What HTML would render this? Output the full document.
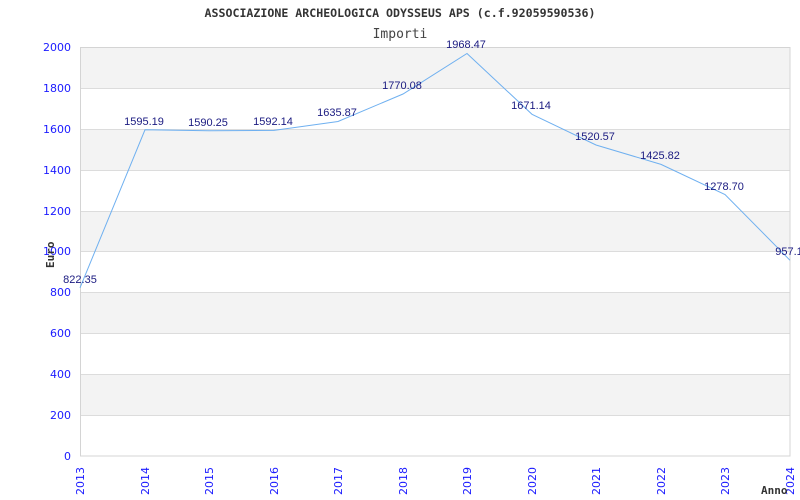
<!DOCTYPE html>
<html><head><style>body{margin:0;background:#fff}svg{display:block}</style></head><body>
<svg width="800" height="500" xmlns="http://www.w3.org/2000/svg" font-family="Liberation Sans, DejaVu Sans, sans-serif">
<rect width="800" height="500" fill="#fff"/>
<g fill="#f3f3f3">
<rect x="80" y="47" width="710" height="41"/>
<rect x="80" y="129" width="710" height="41"/>
<rect x="80" y="211" width="710" height="40"/>
<rect x="80" y="292" width="710" height="41"/>
<rect x="80" y="374" width="710" height="41"/>
</g>
<g stroke="#dcdcdc" stroke-width="1">
<line x1="80" y1="88.5" x2="790" y2="88.5"/><line x1="80" y1="129.5" x2="790" y2="129.5"/>
<line x1="80" y1="170.5" x2="790" y2="170.5"/><line x1="80" y1="211.5" x2="790" y2="211.5"/>
<line x1="80" y1="251.5" x2="790" y2="251.5"/><line x1="80" y1="292.5" x2="790" y2="292.5"/>
<line x1="80" y1="333.5" x2="790" y2="333.5"/><line x1="80" y1="374.5" x2="790" y2="374.5"/>
<line x1="80" y1="415.5" x2="790" y2="415.5"/>
</g>
<rect x="80.5" y="47.5" width="709.5" height="408.5" fill="none" stroke="#d4d4d4"/>
<text x="400" y="17" text-anchor="middle" font-family="DejaVu Sans Mono, Liberation Mono, monospace" font-weight="bold" font-size="11.6" fill="#333">ASSOCIAZIONE ARCHEOLOGICA ODYSSEUS APS (c.f.92059590536)</text>
<text x="400" y="38" text-anchor="middle" font-family="DejaVu Sans Mono, Liberation Mono, monospace" font-size="13" fill="#444">Importi</text>
<g font-family="DejaVu Sans, sans-serif" font-size="11" fill="#1a1aff" text-anchor="end">
<text x="71" y="51">2000</text><text x="71" y="92">1800</text><text x="71" y="133">1600</text>
<text x="71" y="174">1400</text><text x="71" y="215">1200</text><text x="71" y="255">1000</text>
<text x="71" y="296">800</text><text x="71" y="337">600</text><text x="71" y="378">400</text>
<text x="71" y="419">200</text><text x="71" y="460">0</text>
</g>
<g font-family="DejaVu Sans, sans-serif" font-size="11" fill="#1a1aff">
<text transform="translate(84,495) rotate(-90)">2013</text>
<text transform="translate(149,495) rotate(-90)">2014</text>
<text transform="translate(213,495) rotate(-90)">2015</text>
<text transform="translate(278,495) rotate(-90)">2016</text>
<text transform="translate(342,495) rotate(-90)">2017</text>
<text transform="translate(407,495) rotate(-90)">2018</text>
<text transform="translate(471,495) rotate(-90)">2019</text>
<text transform="translate(536,495) rotate(-90)">2020</text>
<text transform="translate(600,495) rotate(-90)">2021</text>
<text transform="translate(665,495) rotate(-90)">2022</text>
<text transform="translate(729,495) rotate(-90)">2023</text>
<text transform="translate(794,495) rotate(-90)">2024</text>
</g>
<text transform="translate(54,268) rotate(-90)" font-family="DejaVu Sans Mono, monospace" font-weight="bold" font-size="11" fill="#333">Euro</text>
<text x="761" y="494" font-family="DejaVu Sans Mono, monospace" font-weight="bold" font-size="11" fill="#333">Anno</text>
<polyline fill="none" stroke="#6fb0f0" stroke-width="1" points="80,287.8 145,129.8 209,130.8 274,130.4 338,121.5 403,94 467,53.5 532,114.3 596,145 661,164.4 725,194.5 790,260.3"/>
<g font-family="Liberation Sans, sans-serif" font-size="11" fill="#1a1a80" text-anchor="middle">
<text x="80" y="283">822.35</text><text x="144" y="125">1595.19</text><text x="208" y="126">1590.25</text>
<text x="273" y="125">1592.14</text><text x="337" y="116">1635.87</text><text x="402" y="89">1770.08</text>
<text x="466" y="48">1968.47</text><text x="531" y="109">1671.14</text><text x="595" y="140">1520.57</text>
<text x="660" y="159">1425.82</text><text x="724" y="190">1278.70</text><text x="789" y="255">957.1</text>
</g>
</svg>
</body></html>
